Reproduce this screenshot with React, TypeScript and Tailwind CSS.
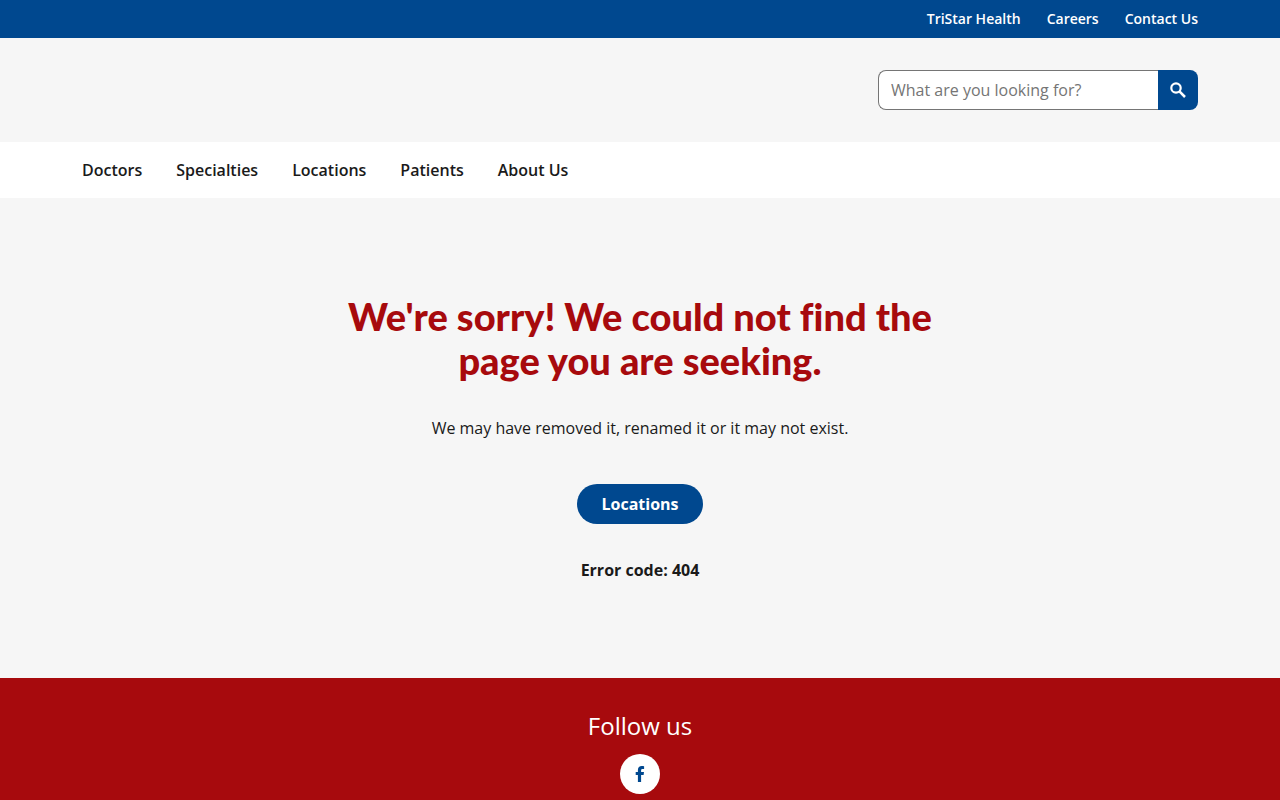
import React from "react";

const utilityLinks = ["TriStar Health", "Careers", "Contact Us"];
const mainLinks = ["Doctors", "Specialties", "Locations", "Patients", "About Us"];

function Container({ className = "", children }: { className?: string; children: React.ReactNode }) {
  return <div className={`mx-auto flex w-full max-w-[1164px] items-center px-6 ${className}`}>{children}</div>;
}

function SearchIcon() {
  return (
    <svg viewBox="0 0 20 20" className="size-5" fill="none" stroke="currentColor" aria-hidden="true">
      <circle cx="8" cy="8" r="4.7" strokeWidth="2.2" />
      <path d="M11.2 11.2 17 17" strokeWidth="2.5" />
    </svg>
  );
}

function FacebookIcon() {
  return (
    <svg viewBox="0 0 16 16" className="size-4" fill="currentColor" aria-hidden="true">
      <path d="M5.9 16V9H3.7V6.1h2.2V4.1C5.9 1.5 7.4.1 9.8.1c1 0 2 .1 2.3.2V3h-1.5c-1.2 0-1.5.6-1.5 1.4v1.7h2.9l-.4 2.9H9.1v7z" />
    </svg>
  );
}

function Header() {
  return (
    <header>
      <nav aria-label="Utility" className="bg-[#00488f] text-white">
        <Container className="h-[38px] justify-end gap-[26px] text-sm font-semibold">
          {utilityLinks.map((label) => (
            <a key={label} href="#" className="hover:underline">
              {label}
            </a>
          ))}
        </Container>
      </nav>
      <Container className="justify-end py-8">
        <form role="search" className="flex h-10 w-80" onSubmit={(e) => e.preventDefault()}>
          <input
            type="search"
            aria-label="What are you looking for?"
            placeholder="What are you looking for?"
            className="min-w-0 flex-1 rounded-l-lg border border-r-0 border-[#757575] bg-white px-3 text-base placeholder:text-[#757575]"
          />
          <button
            type="submit"
            aria-label="Search"
            className="flex w-10 items-center justify-center rounded-r-lg bg-[#00488f] text-white"
          >
            <SearchIcon />
          </button>
        </form>
      </Container>
      <nav aria-label="Main" className="bg-white">
        <Container className="h-14 gap-[34px] text-base font-semibold">
          {mainLinks.map((label) => (
            <a key={label} href="#" className="hover:underline">
              {label}
            </a>
          ))}
        </Container>
      </nav>
    </header>
  );
}

export default function App() {
  return (
    <div className="flex min-h-screen flex-col bg-[#f6f6f6] font-['Open_Sans',sans-serif] text-[#1a1a1a]">
      <Header />
      <main className="flex flex-col items-center px-6 py-24 text-center">
        <h1 className="max-w-[620px] font-['Lato',sans-serif] text-[38px] leading-[44px] font-black text-[#a70a0d] [font-variant-ligatures:none]">
          We're sorry! We could not find the page you are seeking.
        </h1>
        <p className="mt-[34px] text-base">We may have removed it, renamed it or it may not exist.</p>
        <a
          href="#"
          className="mt-11 flex h-10 items-center rounded-full bg-[#00488f] px-6 text-base font-bold text-white"
        >
          Locations
        </a>
        <p className="mt-[34px] text-base font-bold">Error code: 404</p>
      </main>
      <footer className="flex flex-1 flex-col items-center bg-[#a70a0d] px-6 pt-8 pb-1.5 text-white">
        <h2 className="text-2xl">Follow us</h2>
        <a
          href="#"
          aria-label="Facebook"
          className="mt-3 flex size-10 items-center justify-center rounded-full bg-white text-[#00488f]"
        >
          <FacebookIcon />
        </a>
      </footer>
    </div>
  );
}
